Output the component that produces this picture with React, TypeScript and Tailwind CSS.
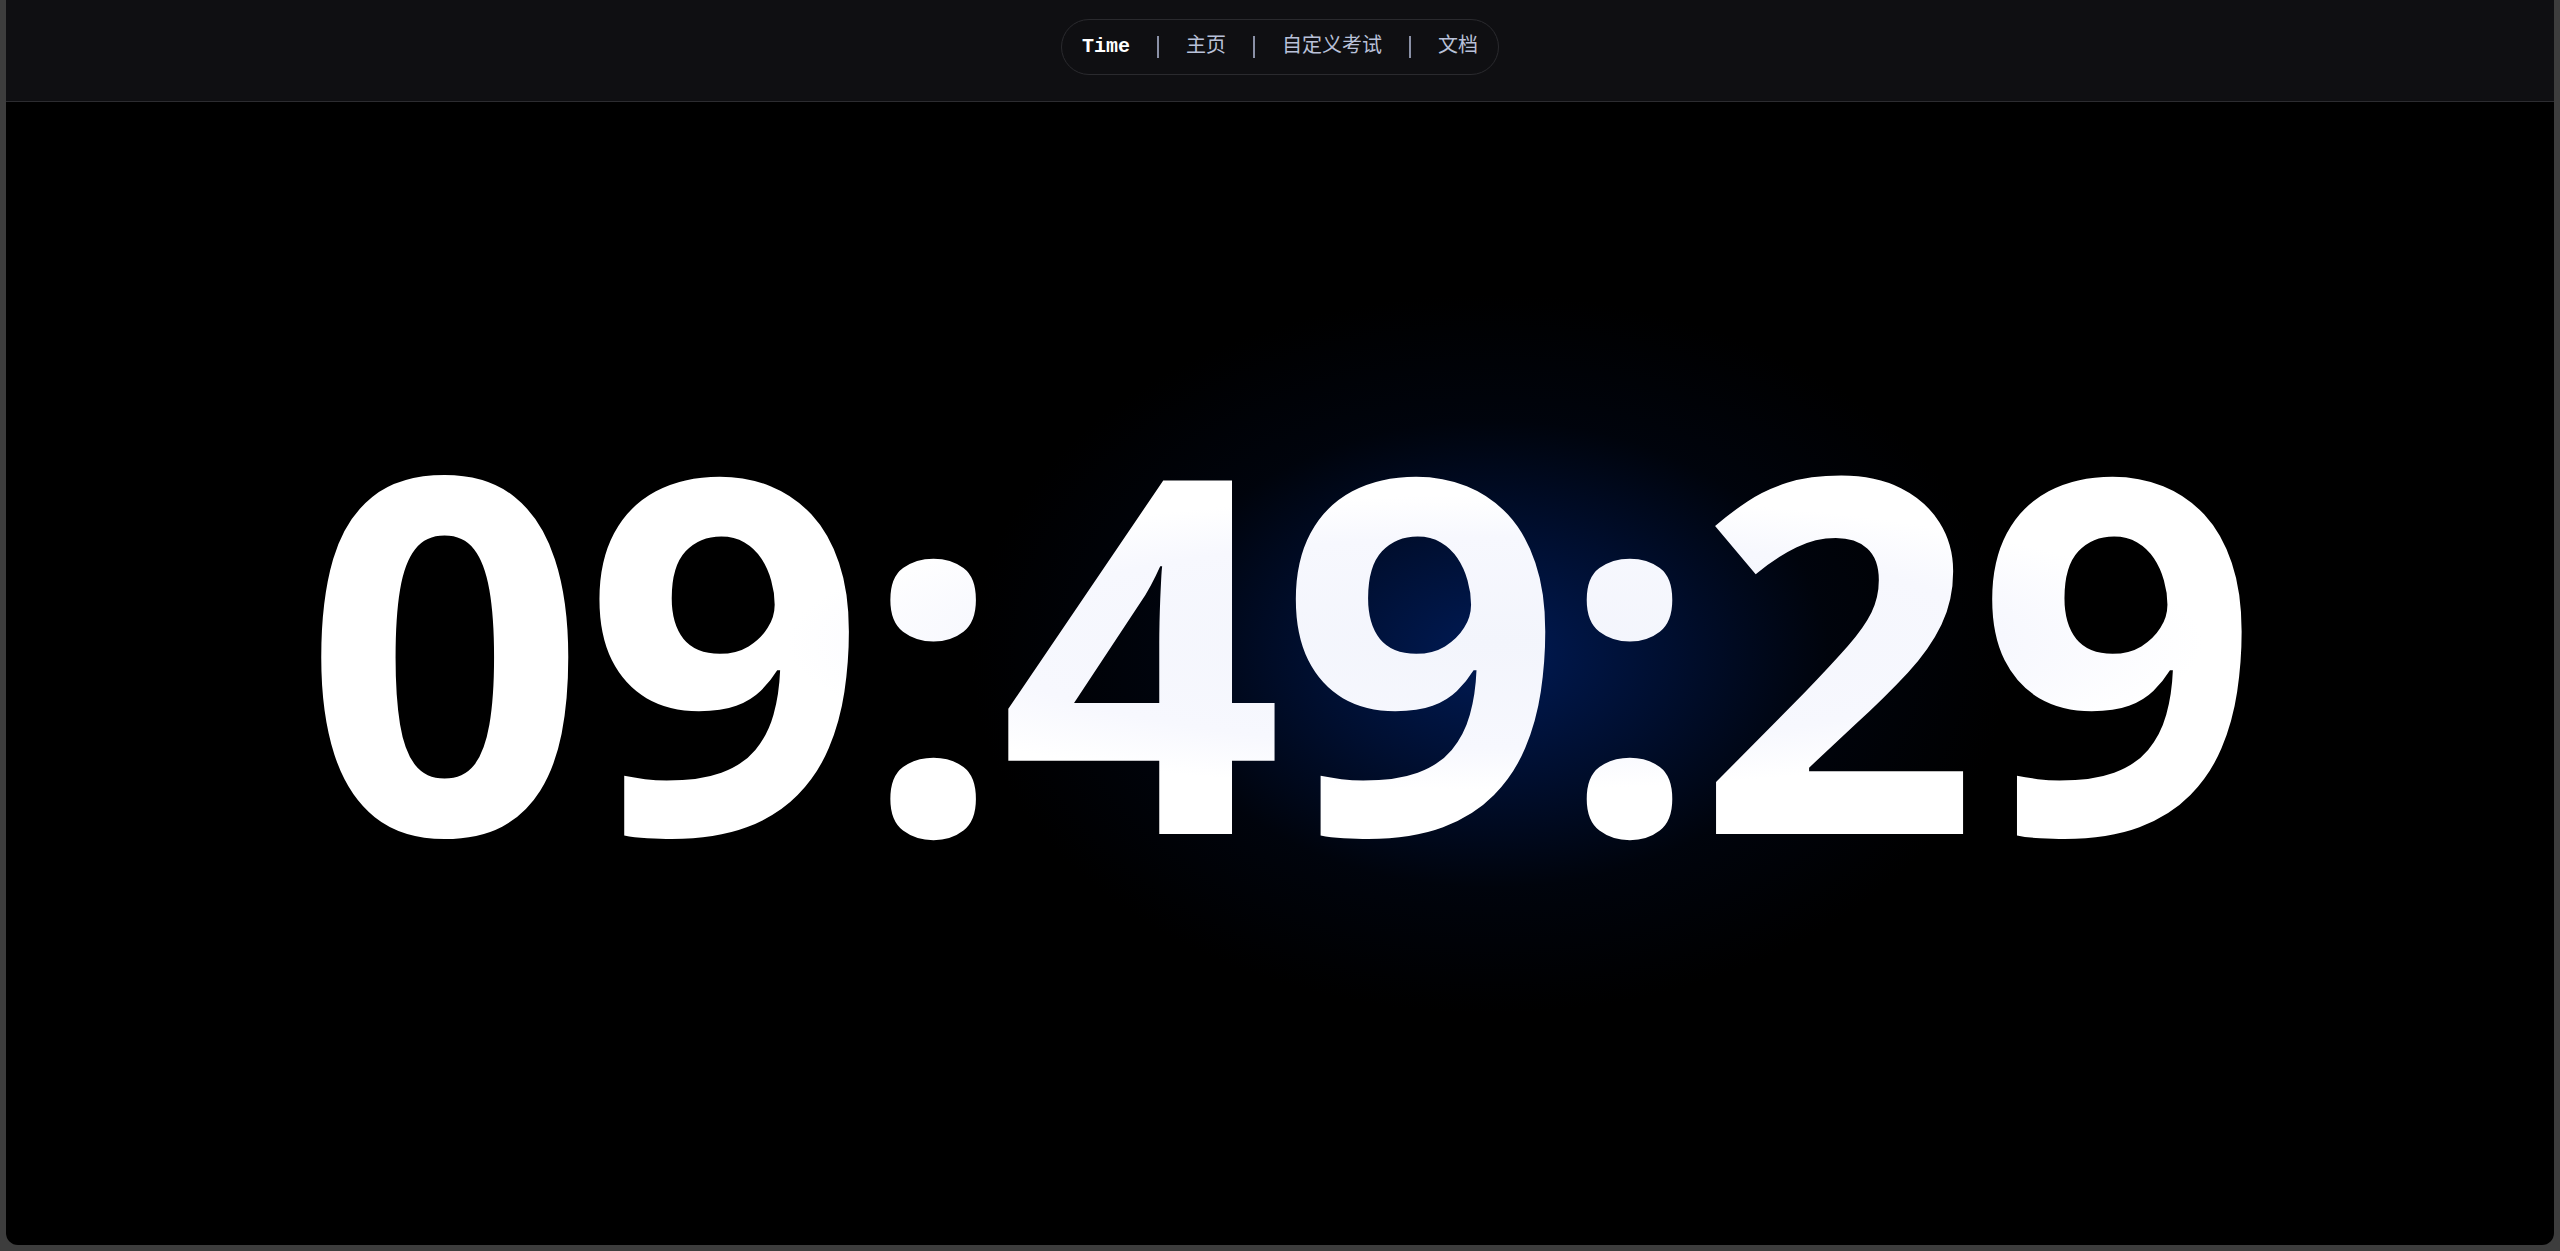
import React from "react";

export default function App() {
  const items = ["主页", "自定义考试", "文档"];
  return (
    <div className="h-screen w-full bg-[#3d3d3d] px-[6px] pb-[6px]">
      <div className="flex h-full flex-col overflow-hidden rounded-b-[12px] bg-black">
        <header className="flex h-[102px] shrink-0 items-center justify-center border-b border-[#2c2c30] bg-[#0f0f12]">
          <nav className="-mt-[8px] flex h-[56px] items-center rounded-full border border-[#2a2a2e] px-[20px] font-['Liberation_Mono','Noto_Sans_CJK_SC',monospace] text-[20px]">
            <span className="font-bold text-white">Time</span>
            {items.map((t) => (
              <React.Fragment key={t}>
                <span className="mx-[27px] h-[22px] w-[2px] bg-[#8a90a6]" />
                <span className="text-[#b9c1d9]">{t}</span>
              </React.Fragment>
            ))}
          </nav>
        </header>
        <main className="relative flex flex-1 items-center justify-center">
          <div className="pointer-events-none absolute left-[1484px] top-[552px] h-[720px] w-[1040px] -translate-x-1/2 -translate-y-1/2 rounded-full bg-[radial-gradient(closest-side,rgba(0,28,90,0.95),rgba(0,22,72,0.65)_35%,rgba(0,12,40,0.3)_65%,rgba(0,0,0,0)_100%)]" />
          <div className="relative -mt-[62px] bg-[radial-gradient(ellipse_at_61%_50%,#f3f5fc_0%,#f7f8fe_30%,#ffffff_42%)] bg-clip-text font-['Noto_Sans',sans-serif] text-[495px] font-bold leading-none tabular-nums tracking-[-3px] text-transparent">
            09:49:29
          </div>
        </main>
      </div>
    </div>
  );
}
